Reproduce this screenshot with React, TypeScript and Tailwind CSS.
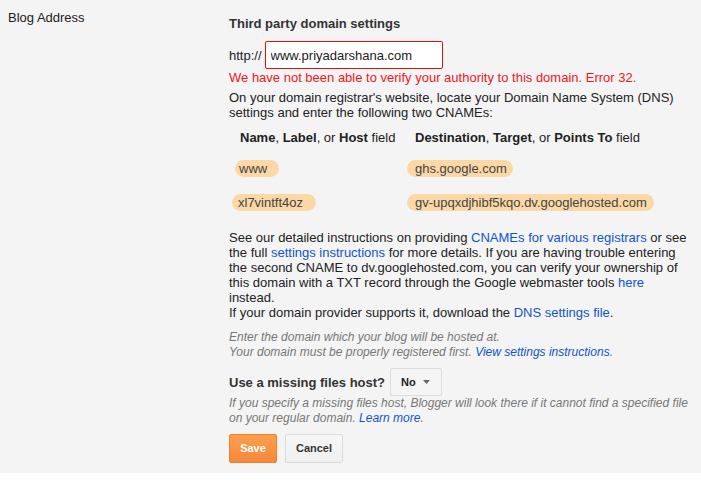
import { ReactNode } from "react";

const A = ({ children }: { children: ReactNode }) => (
  <a href="#" className="text-[#1155cc]">
    {children}
  </a>
);

const Mark = ({ children, pad }: { children: ReactNode; pad: string }) => (
  <span className={`inline-block rounded-full bg-[#fbd8a6] py-[1px] text-[#444] ${pad}`}>
    {children}
  </span>
);

export default function App() {
  return (
    <div className="min-h-[481px] bg-white font-['Liberation_Sans',Arial,sans-serif] text-[13px] leading-[15px] text-[#222]">
      <div className="flex h-[473px] bg-[#f4f4f4]">
        <div className="w-[229px] shrink-0 pl-2 pt-[10px]">Blog Address</div>

        <div className="w-[466px] shrink-0 pt-[16px]">
          <h2 className="text-[13px] font-bold leading-[16px] text-[#333]">
            Third party domain settings
          </h2>

          <div className="mt-[9px] flex items-center gap-[3px]">
            <span>http://</span>
            <input
              readOnly
              value="www.priyadarshana.com"
              className="h-[28px] w-[178px] rounded-[2px] border border-[#dd1111] bg-white px-[5px] text-[13px] text-[#222] outline-none"
            />
          </div>

          <p className="mt-[1px] text-[#f0141e]">
            We have not been able to verify your authority to this domain. Error 32.
          </p>

          <p className="mt-[5px]">
            On your domain registrar's website, locate your Domain Name System (DNS)
            <br />
            settings and enter the following two CNAMEs:
          </p>

          <div className="mt-[10px] grid grid-cols-[186px_1fr]">
            <div className="pl-[11px]">
              <b>Name</b>, <b>Label</b>, or <b>Host</b> field
            </div>
            <div>
              <b>Destination</b>, <b>Target</b>, or <b>Points To</b> field
            </div>

            <div className="mt-[15px] pl-[6px]">
              <Mark pad="pl-[4px] pr-[12px]">www</Mark>
            </div>
            <div className="mt-[15px] -ml-[8px]">
              <Mark pad="pl-[8px] pr-[6px]">ghs.google.com</Mark>
            </div>

            <div className="mt-[17px] pl-[3px]">
              <Mark pad="pl-[6px] pr-[13px]">xl7vintft4oz</Mark>
            </div>
            <div className="mt-[17px] -ml-[8px]">
              <Mark pad="pl-[8px] pr-[7px]">gv-upqxdjhibf5kqo.dv.googlehosted.com</Mark>
            </div>
          </div>

          <p className="mt-[19px]">
            See our detailed instructions on providing <A>CNAMEs for various registrars</A> or see
            <br />
            the full <A>settings instructions</A> for more details. If you are having trouble entering
            <br />
            the second CNAME to dv.googlehosted.com, you can verify your ownership of
            <br />
            this domain with a TXT record through the Google webmaster tools <A>here</A>
            <br />
            instead.
            <br />
            If your domain provider supports it, download the <A>DNS settings file</A>.
          </p>

          <p className="mt-[10px] text-[12px] italic text-[#777]">
            Enter the domain which your blog will be hosted at.
            <br />
            Your domain must be properly registered first. <A>View settings instructions</A>.
          </p>

          <div className="mt-[8px] flex items-center gap-[5px]">
            <span className="font-bold text-[#333]">Use a missing files host?</span>
            <button className="flex h-[28px] w-[52px] items-center justify-between rounded-[2px] border border-[#dcdcdc] bg-[#f5f5f5] pl-[10px] pr-[11px] text-[11px] font-bold text-[#222]">
              <span>No</span>
              <svg width="7" height="4" viewBox="0 0 7 4">
                <path d="M0 0h7L3.5 4z" fill="#666" />
              </svg>
            </button>
          </div>

          <p className="text-[12px] italic text-[#777]">
            If you specify a missing files host, Blogger will look there if it cannot find a specified file
            <br />
            on your regular domain. <A>Learn more</A>.
          </p>

          <div className="mt-[8px] flex gap-2">
            <button className="h-[29px] w-[48px] rounded-[2px] border border-[#f0802e] bg-gradient-to-b from-[#fd9f4f] to-[#f5873a] text-[11px] font-bold text-white">
              Save
            </button>
            <button className="h-[29px] w-[58px] rounded-[2px] border border-[#dcdcdc] bg-gradient-to-b from-[#f6f6f6] to-[#f0f0f0] text-[11px] font-bold text-[#333]">
              Cancel
            </button>
          </div>
        </div>
      </div>
    </div>
  );
}
